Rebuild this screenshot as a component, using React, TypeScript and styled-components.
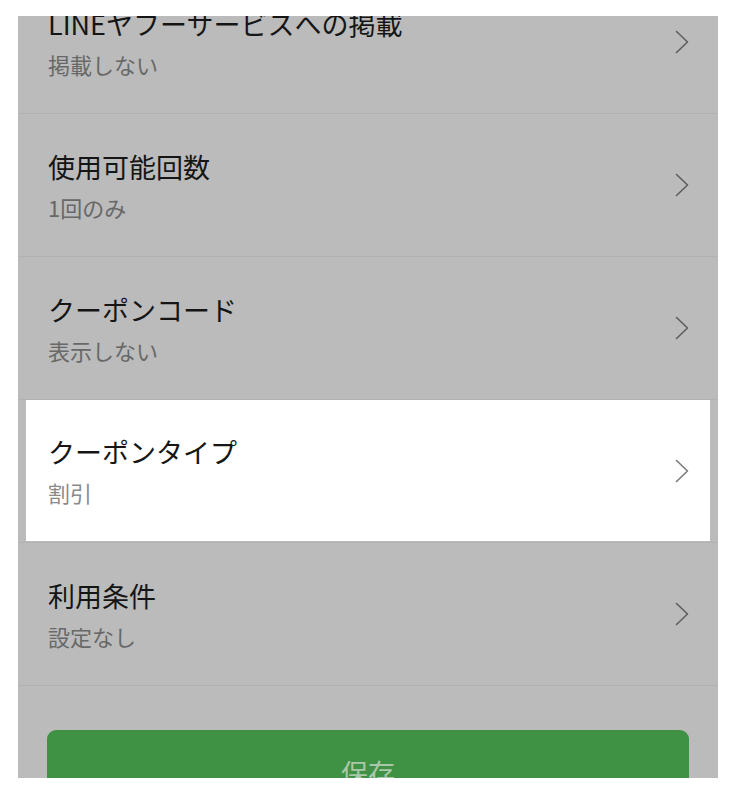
import React from 'react'
import styled, { createGlobalStyle } from 'styled-components'

const GlobalStyle = createGlobalStyle`
  html, body {
    margin: 0;
    padding: 0;
    background: #ffffff;
  }
  body {
    font-family: 'Noto Sans CJK JP', 'Noto Sans', sans-serif;
  }
`

interface RowProps {
  readonly highlighted?: boolean
}

const Screen = styled.div`
  margin: 16px 18px 0 18px;
  width: 700px;
  height: 762px;
  background: #bbbbbb;
  overflow: hidden;
`

const List = styled.div`
  display: flex;
  flex-direction: column;
  margin-top: -45px;
`

const Row = styled.div<RowProps>`
  height: 143px;
  border-bottom: 1px solid #b1b1b1;
  display: flex;
  align-items: stretch;
  padding: ${(props) => (props.highlighted ? '0 8px 1px 8px' : '0')};
  box-sizing: border-box;
`

const RowInner = styled.div<RowProps>`
  flex: 1;
  display: flex;
  align-items: center;
  justify-content: space-between;
  padding: ${(props) => (props.highlighted ? '0 21px 0 22px' : '0 29px 0 30px')};
  background: ${(props) => (props.highlighted ? '#ffffff' : 'transparent')};
`

const TextBlock = styled.div`
  display: flex;
  flex-direction: column;
  gap: 9px;
`

const Title = styled.div`
  font-size: 27px;
  line-height: 34px;
  color: #151515;
  white-space: nowrap;
`

const Sub = styled.div<RowProps>`
  font-size: 22px;
  line-height: 28px;
  color: ${(props) => (props.highlighted ? '#8a8a8a' : '#686868')};
`

const Chevron = styled.svg<RowProps>`
  width: 14px;
  height: 24px;
  flex-shrink: 0;
  stroke: ${(props) => (props.highlighted ? '#7a7a7a' : '#5e5e5e')};
`

const Footer = styled.div`
  padding: 44px 29px 0 29px;
`

const SaveButton = styled.button`
  width: 100%;
  height: 84px;
  border: none;
  border-radius: 9px;
  background: #3f9143;
  color: #a9c7aa;
  font-family: 'Noto Sans CJK JP', 'Noto Sans', sans-serif;
  font-size: 27px;
  cursor: pointer;
`

type Item = {
  title: string
  value: string
  highlighted?: boolean
}

const items: Item[] = [
  { title: 'LINEヤフーサービスへの掲載', value: '掲載しない' },
  { title: '使用可能回数', value: '1回のみ' },
  { title: 'クーポンコード', value: '表示しない' },
  { title: 'クーポンタイプ', value: '割引', highlighted: true },
  { title: '利用条件', value: '設定なし' },
]

const SettingRow: React.FC<{ item: Item }> = ({ item }) => {
  const hl = !!item.highlighted
  return (
    <Row highlighted={hl}>
      <RowInner highlighted={hl}>
        <TextBlock>
          <Title>{item.title}</Title>
          <Sub highlighted={hl}>{item.value}</Sub>
        </TextBlock>
        <Chevron highlighted={hl} viewBox="0 0 14 24" fill="none">
          <path d="M1.5 1.5 L12.5 12 L1.5 22.5" strokeWidth="1.6" strokeLinecap="round" strokeLinejoin="round" />
        </Chevron>
      </RowInner>
    </Row>
  )
}

const App: React.FC = () => {
  return (
    <>
      <GlobalStyle />
      <Screen>
        <List>
          {items.map((item) => (
            <SettingRow key={item.title} item={item} />
          ))}
        </List>
        <Footer>
          <SaveButton>保存</SaveButton>
        </Footer>
      </Screen>
    </>
  )
}

export default App
